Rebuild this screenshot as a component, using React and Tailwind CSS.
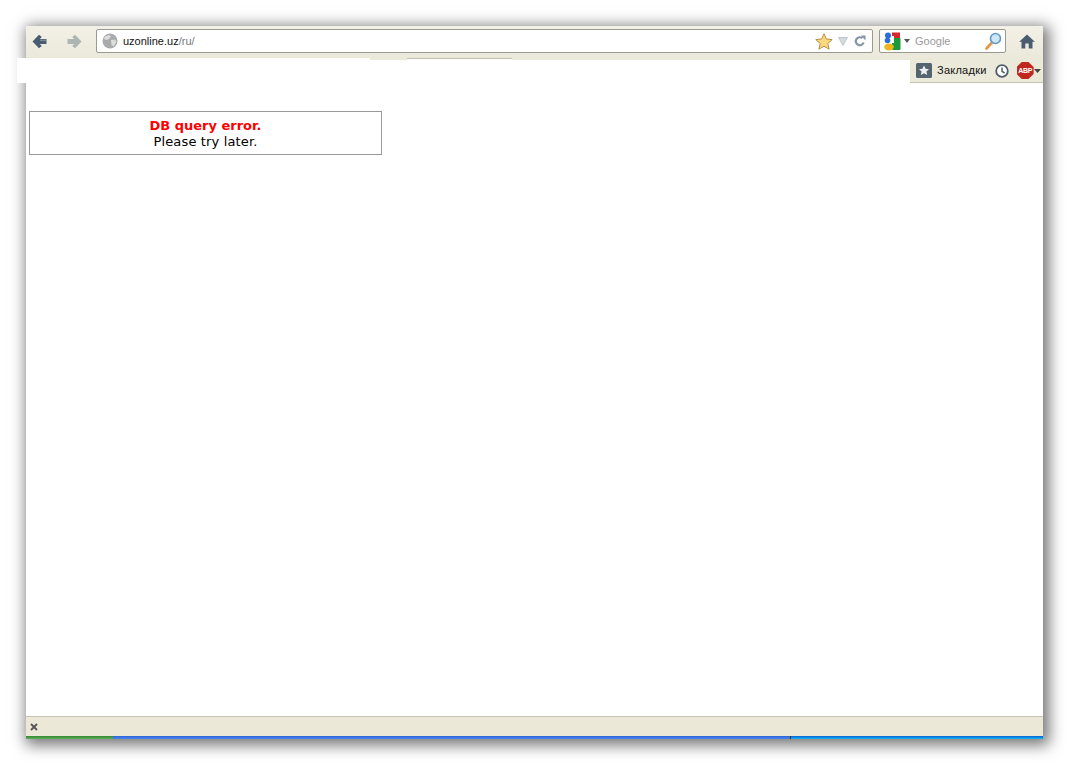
export default function App() {
  const ui = { fontFamily: '"Liberation Sans", Arial, sans-serif' };
  return (
    <div className="w-[1069px] h-[765px] bg-white overflow-hidden pt-[26px] pl-[26px]" style={ui}>
      <div className="relative w-[1017px] h-[713px] flex flex-col bg-white shadow-[3px_3px_14px_3px_rgba(0,0,0,0.55)]">
        {/* Navigation toolbar */}
        <div className="h-[32px] shrink-0 flex items-center bg-gradient-to-b from-[#f3f1e7] to-[#ebe9da] pb-[2px]">
          <div className="w-[21px] flex justify-end">
            <svg width="15" height="15" viewBox="0 0 15 15">
              <path d="M7 0.8 L9.8 3 L7.8 5 H14.5 V10 H7.8 L9.8 12 L7 14.2 L0.5 7.5 Z" fill="#4a5c70" />
              <path d="M8 5.6 H14 V7 H8 Z" fill="#7b8a99" />
            </svg>
          </div>
          <div className="w-[35px] flex justify-end">
            <svg width="15" height="15" viewBox="0 0 15 15">
              <path d="M8 0.8 L5.2 3 L7.2 5 H0.5 V10 H7.2 L5.2 12 L8 14.2 L14.5 7.5 Z" fill="#adb5b3" />
            </svg>
          </div>
          {/* URL bar */}
          <div className="ml-[14px] w-[777px] h-[24px] flex items-center bg-white border border-[#9a9a90] rounded-[2px]">
            <svg className="ml-[5px] shrink-0" width="16" height="16" viewBox="0 0 16 16">
              <circle cx="8" cy="8" r="7.5" fill="#a9aaac" />
              <path d="M3 3.5 L7 2 L9 3.5 L7 6 L4.5 7 L2 6 Z M9 7 L13 6.5 L14.5 9 L11.5 13.5 L9.5 12 Z" fill="#dcdcdc" />
            </svg>
            <span className="ml-[5px] text-[11px] text-[#111]">uzonline.uz<span className="text-[#777]">/ru/</span></span>
            <div className="ml-auto flex items-center">
              <svg width="18" height="17" viewBox="0 0 18 17">
                <path d="M9 0.8 L11.4 6 L17.2 6.6 L12.8 10.4 L14.1 16.2 L9 13.2 L3.9 16.2 L5.2 10.4 L0.8 6.6 L6.6 6 Z" fill="#fbd77d" stroke="#b98e45" strokeWidth="1" strokeLinejoin="round" />
              </svg>
              <svg className="ml-[5px]" width="10" height="9" viewBox="0 0 10 9">
                <path d="M0.5 0.5 H9.5 L5 8.5 Z" fill="#d5dade" stroke="#b5bcc2" strokeWidth="0.8" />
              </svg>
              <svg className="ml-[6px] mr-[6px]" width="12" height="12" viewBox="0 0 12 12">
                <path d="M9.6 7.5 A4 4 0 1 1 8.4 3.2" fill="none" stroke="#8495a6" strokeWidth="2.2" />
                <path d="M7 0.5 L11.5 0.5 L11.5 5.5 Z" fill="#8495a6" />
              </svg>
            </div>
          </div>
          {/* Search */}
          <div className="ml-[6px] w-[127px] h-[24px] flex items-center bg-white border border-[#9a9a90] rounded-[2px]">
            <svg className="ml-[4px] shrink-0" width="17" height="19" viewBox="0 0 17 19">
              <rect x="8" y="0.5" width="8" height="6" fill="#d8262c" />
              <rect x="8" y="6" width="8.5" height="12" rx="1" fill="#1a9a3c" />
              <circle cx="4" cy="3.5" r="3" fill="#2a6fd6" />
              <circle cx="3.5" cy="8.5" r="2.8" fill="#2a6fd6" />
              <ellipse cx="5" cy="15" rx="4.8" ry="3.4" fill="#efb61c" />
              <rect x="7" y="4" width="3" height="7" fill="#ffffff" />
            </svg>
            <svg className="ml-[3px]" width="6" height="4" viewBox="0 0 6 4"><path d="M0 0 H6 L3 4 Z" fill="#555" /></svg>
            <span className="ml-[5px] pt-[1px] text-[11px] text-[#9a9a9a]">Google</span>
            <svg className="ml-auto mr-[3px]" width="17" height="18" viewBox="0 0 17 18">
              <path d="M1.5 16.5 L7 10.5" stroke="#e2964a" strokeWidth="2.6" strokeLinecap="round" />
              <circle cx="10.5" cy="6.5" r="5" fill="#cfe6f6" stroke="#5f9bc9" strokeWidth="1.6" />
            </svg>
          </div>
          {/* Home */}
          <div className="ml-[13px]">
            <svg className="block" width="16" height="15" viewBox="0 0 16 15">
              <path d="M8 0.5 L15.8 7.7 L13.5 7.7 L13.5 14.5 L9.7 14.5 L9.7 9.5 L6.3 9.5 L6.3 14.5 L2.5 14.5 L2.5 7.7 L0.2 7.7 Z" fill="#4a5c70" />
            </svg>
          </div>
        </div>

        {/* Tab strip edge */}
        <div className="h-[2px] shrink-0 flex bg-[#ebe9da]">
          <div className="w-[344px] bg-white" />
          <div className="w-[37px]" />
          <div className="w-[105px] bg-white border-t border-[#c3c1b0]" />
        </div>

        {/* Bookmarks */}
        <div className="h-[23px] shrink-0 flex justify-end">
          <div className="w-[133px] flex items-center bg-[#ebe9da] border-b border-[#c5c3b2] pb-[1px]">
            <svg className="ml-[6px] shrink-0" width="16" height="15" viewBox="0 0 16 15">
              <rect width="16" height="15" rx="1.5" fill="#56646f" />
              <path d="M8 2.5 L9.6 5.8 L13 6.2 L10.4 8.5 L11.2 12 L8 10.2 L4.8 12 L5.6 8.5 L3 6.2 L6.4 5.8 Z" fill="#eef0f0" />
            </svg>
            <span className="ml-[5px] text-[11px] tracking-[0.25px] text-[#111]">Закладки</span>
            <svg className="ml-[8px] shrink-0" width="14" height="14" viewBox="0 0 14 14">
              <circle cx="7" cy="7" r="5.8" fill="#fff" stroke="#4f5d6a" strokeWidth="1.8" />
              <path d="M7 3.5 V7.3 L9.6 9" fill="none" stroke="#4f5d6a" strokeWidth="1.5" />
            </svg>
            <div className="ml-[8px] w-[17px] h-[17px] shrink-0 flex items-center justify-center bg-[#c0271f] [clip-path:polygon(30%_0,70%_0,100%_30%,100%_70%,70%_100%,30%_100%,0_70%,0_30%)]">
              <span className="text-[7px] font-bold leading-none text-white tracking-[-0.3px]">ABP</span>
            </div>
            <svg className="ml-[0px]" width="7" height="4" viewBox="0 0 7 4"><path d="M0 0 H7 L3.5 4 Z" fill="#444" /></svg>
          </div>
        </div>

        {/* Page */}
        <div className="flex-1 min-h-0 pt-[28px] pl-[3px]">
          <div className="w-[353px] h-[44px] border border-[#999] flex flex-col items-center justify-center pt-[2px] text-[13px] leading-[16px]" style={{ fontFamily: '"DejaVu Sans", Verdana, sans-serif' }}>
            <div className="font-bold text-[#f00]">DB query error.</div>
            <div className="text-black tracking-[0.15px]">Please try later.</div>
          </div>
        </div>

        {/* Status bar */}
        <div className="h-[20px] shrink-0 flex items-center bg-[#ebe8d8] border-t border-[#c8c5b4]">
          <svg className="ml-[4px]" width="8" height="8" viewBox="0 0 8 8">
            <path d="M1 1 L7 7 M7 1 L1 7" stroke="#555" strokeWidth="1.8" />
          </svg>
        </div>

        {/* Taskbar sliver */}
        <div className="h-[3px] shrink-0 flex">
          <div className="w-[87px] bg-gradient-to-b from-[#2f8a30] to-[#5fae5c]" />
          <div className="w-[677px] bg-gradient-to-b from-[#2a62d8] to-[#4d87ec]" />
          <div className="w-[1px] bg-[#333]" />
          <div className="flex-1 bg-gradient-to-b from-[#0b5fd4] to-[#1fb4ee]" />
        </div>

        {/* Stray white patch over the window edge */}
        <div className="absolute left-[-9px] top-[32px] w-[353px] h-[25px] bg-white" />
      </div>
    </div>
  );
}
